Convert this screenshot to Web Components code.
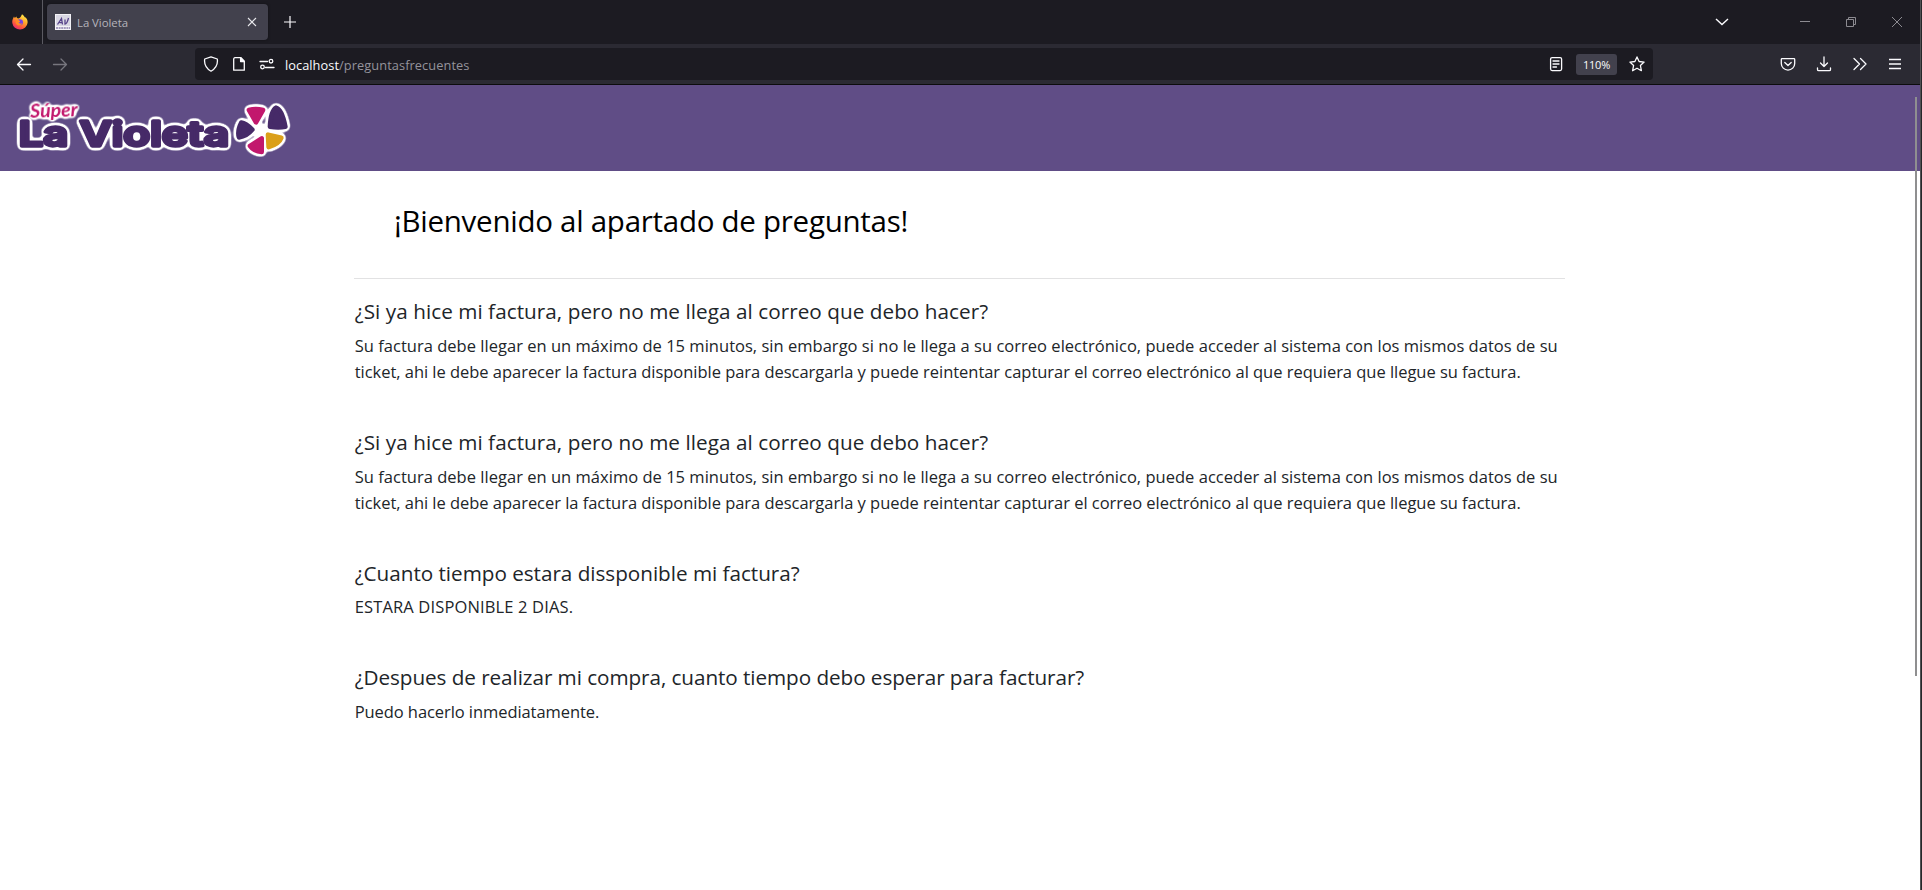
<!DOCTYPE html>
<html lang="es"><head><meta charset="utf-8"><title>La Violeta</title>
<style>html,body{margin:0;height:100%;overflow:hidden;background:#fff;font-family:"Open Sans","Noto Sans",sans-serif}</style></head>
<body><browser-window></browser-window>
<script>
const define=(name,html,ready)=>customElements.define(name,class extends HTMLElement{
  constructor(){super();this.attachShadow({mode:'open'}).innerHTML=html}
  connectedCallback(){if(ready)ready(this)}
});

/* A single line of text whose tracking is adjusted to a given advance width. */
define('fit-line','<style>:host{display:block;white-space:nowrap}span{display:inline-block}</style><span></span>',el=>{
  const s=el.shadowRoot.querySelector('span');
  s.textContent=el.getAttribute('text');
  const n=s.textContent.length, w=+el.getAttribute('w');
  s.style.letterSpacing=((w-s.getBoundingClientRect().width)/n)+'px';
});

define('fire-fox',`<style>:host{display:block;width:16px;height:16px}svg{display:block}</style>
<svg width="16" height="16" viewBox="0 0 16 16"><defs><linearGradient id="f" x1=".8" y1="0" x2=".2" y2="1"><stop offset="0" stop-color="#fff44f"/><stop offset=".4" stop-color="#ffa52a"/><stop offset=".7" stop-color="#ff5a3c"/><stop offset="1" stop-color="#e5207c"/></linearGradient></defs>
<path d="M10 .3c1.500 1 2.300 2 2.700 3 .7 0 1.500.6 2 1.500.8 1.300 1 2.600.9 3.900A7.700 7.400 0 0 1 .3 9c-.2-2 .2-3.700 1.100-5.200L2 2.600l.8 1.500L4.400 2.600l.5 1.400 1.800.4C8.500 4 8.900 2.500 10 .3z" fill="url(#f)"/>
<circle cx="8" cy="8.300" r="3" fill="#7542e5"/><path d="M4 6c1.600-.4 3 0 3.800 1 .6.800.2 1.300-1.200 1.300C7 9.600 8.600 10 10.200 9.300 9.500 12 4 12.500 3.600 8.500z" fill="#ff8a26"/></svg>`);

define('tab-strip',`<style>:host{display:flex;height:44px;background:#1c1b22;align-items:center;box-sizing:border-box}
.ff{width:43px;height:44px;border-right:1px solid #5b5a62;display:flex;align-items:center;padding-left:12px;box-sizing:border-box}
.tab{margin-left:4px;width:221px;height:36px;border-radius:4px;background:#42414d;box-shadow:0 0 3px #0006;display:flex;align-items:center;box-sizing:border-box;padding:0 8px}
.tab fit-line{font-size:11.400px;color:#b5b4bb;margin-left:6px;flex:1}
.plus{margin-left:14.500px}.down{margin-left:auto;margin-right:69px}.win{display:flex;gap:32px;margin-right:16px}svg{display:block;flex:none}</style>
<div class="ff"><fire-fox></fire-fox></div>
<div class="tab"><svg width="16" height="16" viewBox="0 0 16 16"><path fill="#f3f2f6" d="M0 0h16v16H0z"/><path fill="#d9d7e3" d="M1 1h14v11H1z"/><path d="M2.500 10.500 6.500 4.500l1 6M4.500 8.700h3M10 5.500v4.500c1.500 0 2.500-2 3.500-6" fill="none" stroke="#57438a" stroke-width="1.300"/><path d="M1 14h14" stroke="#8d80ad" stroke-width="1.300" stroke-dasharray="2 .6"/></svg>
<fit-line text="La Violeta" w="51"></fit-line>
<svg width="16" height="16" viewBox="0 0 16 16" fill="none" stroke="#e8e8ec" stroke-width="1.100"><path d="m4 4 8 8m0-8-8 8"/></svg></div>
<svg class="plus" width="14" height="14" fill="none" stroke="#fbfbfe" stroke-width="1.200"><path d="M7 1v12M1 7h12"/></svg>
<svg class="down" width="14" height="8" fill="none" stroke="#fbfbfe" stroke-width="1.400"><path d="m1 1 6 5.500L13 1"/></svg>
<div class="win"><svg width="14" height="14" fill="none" stroke="#8c8b91"><path d="M2 6.500h10"/></svg>
<svg width="14" height="14" fill="none" stroke="#8c8b91"><path d="M2.500 4.500h7v7h-7zM4.500 4.500v-2h7v7h-2"/></svg>
<svg width="14" height="14" fill="none" stroke="#8c8b91"><path d="m2 2 10 10M12 2 2 12"/></svg></div>`);

define('nav-bar',`<style>:host{display:flex;height:40px;background:#2b2a33;border-bottom:1px solid #0c0c0d;align-items:center}
svg{display:block;flex:none;fill:none;stroke:#fbfbfe;stroke-width:1.300;stroke-linecap:round;stroke-linejoin:round}
.back{margin-left:16px}.fwd{margin-left:20px;stroke:#77767e}
.url{margin-left:127px;width:1458px;height:32px;border-radius:4px;background:#1c1b22;display:flex;align-items:center;box-sizing:border-box;padding-left:8px}
.host{color:#fbfbfe;font-size:12.800px;margin-left:10px;padding-top:2px}.path{color:#94939b;font-size:12.800px;flex:1;padding-top:2px}
.zoom{width:41px;height:21px;border-radius:3px;background:#42414d;color:#fbfbfe;font-size:11px;display:flex;justify-content:center;align-items:center;margin:0 12px 0 13px}
.zoom fit-line{padding-top:1px}
.tools{margin-left:auto;display:flex;gap:20px;margin-right:18px}</style>
<svg class="back" width="16" height="16"><path d="M14.500 8.500h-13M7 3 1.500 8.500 7 14"/></svg><svg class="fwd" width="16" height="16"><path d="M1.500 8.500h13M9 3l5.500 5.500L9 14"/></svg>
<div class="url"><svg width="16" height="16"><path d="M8 .8 14.300 3c.7 5-.8 9-6.300 12.200C2.500 12 1 8 1.700 3z"/></svg>
<svg width="14" height="16" style="margin-left:13px"><path d="M3 1.700h6l3.300 3.500v9H1.700v-11c0-1 .5-1.500 1.300-1.500z"/><path fill="#fbfbfe" d="M8.600 2v3.500h3.500z"/></svg>
<svg width="16" height="12" style="margin-left:13px"><path d="M1 3.500h7.500M6.500 9.500H15"/><circle cx="12" cy="3.200" r="1.800"/><circle cx="3.500" cy="9" r="1.800"/></svg>
<fit-line class="host" text="localhost" w="54"></fit-line><fit-line class="path" text="/preguntasfrecuentes" w="130.500"></fit-line>
<svg width="14" height="16"><rect x="1.600" y="1.600" width="11" height="13" rx="1.500"/><path d="M4 5h6M4 8h6M4 11h3.500"/></svg>
<div class="zoom"><fit-line text="110%" w="27"></fit-line></div>
<svg width="16" height="16" style="margin-right:8px"><path d="m8 .9 2.100 4.600 5 .6-3.700 3.400 1 5.200L8 12.200l-4.400 2.500 1-5.200L.9 6.100l5-.6z"/></svg></div>
<div class="tools"><svg width="16" height="16"><path d="M2 2.700h12c.4 0 .7.3.7.7v4a6.700 6.700 0 0 1-13.400 0v-4c0-.4.300-.7.700-.7zM4.800 6.500 8 9.500l3.200-3"/></svg>
<svg width="16" height="16"><path d="M8 1v9.500M4.500 7 8 10.500 11.500 7M1.500 12v1.500c0 .7.500 1.200 1.200 1.200h10.600c.7 0 1.200-.5 1.200-1.200V12"/></svg>
<svg width="16" height="16"><path d="m2 2.500 5.500 5.500L2 13.500M8.500 2.500 14 8l-5.500 5.500"/></svg>
<svg width="14" height="16" style="stroke-linecap:butt"><path d="M1 3.500h12M1 8h12M1 12.500h12"/></svg></div>`);

/* The halo filter grows the silhouette into a rounded white outline. */
define('violeta-logo',`<style>:host{display:block;width:310px;height:86px}svg{display:block}
text{stroke-linejoin:round}.i{font-family:Inter,sans-serif;font-weight:600;font-size:102px;fill:#462a68;stroke:#462a68;stroke-width:10}
.s{font-family:Lato,sans-serif;font-style:italic;font-weight:700;font-size:56px;fill:#c2186d}.p{stroke-width:14;stroke-linejoin:round}</style>
<svg width="310" height="86" viewBox="0 0 930 258">
<defs><filter id="h" filterUnits="userSpaceOnUse" x="0" y="0" width="930" height="258" color-interpolation-filters="sRGB"><feGaussianBlur in="SourceAlpha" stdDeviation="6.500"/><feComponentTransfer result="a"><feFuncA type="linear" slope="9" intercept="-.4"/></feComponentTransfer><feFlood flood-color="#fff"/><feComposite in2="a" operator="in"/><feMerge><feMergeNode/><feMergeNode in="SourceGraphic"/></feMerge></filter></defs>
<g filter="url(#h)">
<text class="i" x="56" y="182" textLength="148" lengthAdjust="spacingAndGlyphs">La</text><text class="i" x="239" y="182" textLength="448" lengthAdjust="spacingAndGlyphs">Violeta</text>
<circle cx="783" cy="138" r="16" fill="#fff"/>
<g class="p" fill="#c2186d" stroke="#c2186d"><path d="M747 75q20-6 42 0l-21 37zM785 160v41q-24-2-35-18z"/></g>
<g class="p" fill="#462a68" stroke="#462a68"><path d="M810 125q2-48 18-57 18 4 28 57-20 4-46 0zM724 113q14 2 33 21-16 20-40 23-6-18 7-44z"/></g>
<path class="p" fill="#dba01a" stroke="#dba01a" d="M804 149l40 9q-6 18-38 28z"/></g>
<g filter="url(#h)" transform="rotate(-2 160 90)"><text class="s" x="91" y="97" textLength="142" lengthAdjust="spacingAndGlyphs">Súper</text></g></svg>`);

define('site-header','<style>:host{display:block;height:86px;background:#604d86}</style><violeta-logo></violeta-logo>');

define('faq-item','<style>:host{display:block;margin-bottom:44.500px;color:#212529;font-size:16.500px;line-height:26.200px}::slotted([slot=q]){font-size:20.700px;line-height:24px;margin-bottom:9.900px}</style><slot name="q"></slot><slot></slot>');

const long=`<faq-item><fit-line slot="q" text="¿Si ya hice mi factura, pero no me llega al correo que debo hacer?" w="633.500"></fit-line>
<fit-line text="Su factura debe llegar en un máximo de 15 minutos, sin embargo si no le llega a su correo electrónico, puede acceder al sistema con los mismos datos de su" w="1203"></fit-line>
<fit-line text="ticket, ahi le debe aparecer la factura disponible para descargarla y puede reintentar capturar el correo electrónico al que requiera que llegue su factura." w="1166"></fit-line></faq-item>`;
define('faq-page',`<style>:host{display:block;width:1211px;margin-left:354px;padding-top:30px}
.title{font-size:29.500px;line-height:40px;color:#000;margin-left:40px;height:77px}hr{border:0;height:1px;background:#e2e2e3;margin:0 0 20px}
faq-item{padding-left:.7px}</style>
<fit-line class="title" text="¡Bienvenido al apartado de preguntas!" w="514"></fit-line><hr>${long}${long}
<faq-item><fit-line slot="q" text="¿Cuanto tiempo estara dissponible mi factura?" w="445"></fit-line><fit-line text="ESTARA DISPONIBLE 2 DIAS." w="218.500"></fit-line></faq-item>
<faq-item><fit-line slot="q" text="¿Despues de realizar mi compra, cuanto tiempo debo esperar para facturar?" w="729.500"></fit-line><fit-line text="Puedo hacerlo inmediatamente." w="244.500"></fit-line></faq-item>`);

define('browser-window',`<style>:host{display:grid;grid-template-columns:1920px 2px;height:890px;overflow:hidden}
main{position:relative;min-width:0}.edge{background:linear-gradient(90deg,#505254 50%,#26282a 50%)}
.bar{position:absolute;right:3px;top:97px;width:2px;height:579px;background:#8f8f90}</style>
<main><tab-strip></tab-strip><nav-bar></nav-bar><site-header></site-header><faq-page></faq-page><div class="bar"></div></main><div class="edge"></div>`);
</script></body></html>
